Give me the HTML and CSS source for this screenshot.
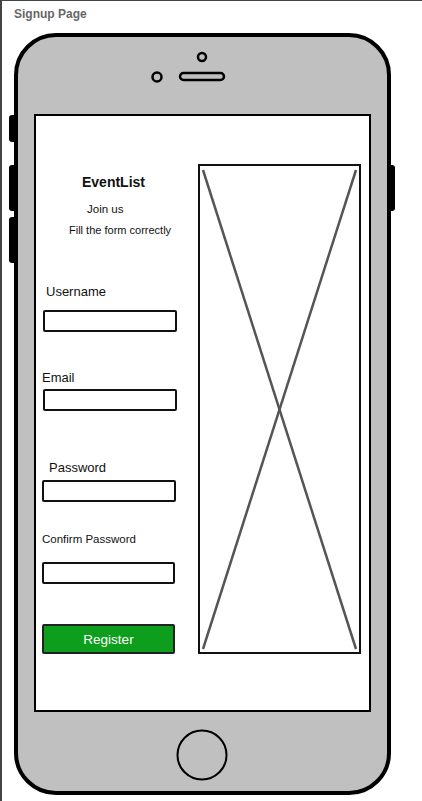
FILE: index.html
```html
<!DOCTYPE html>
<html lang="en">
<head>
    <meta charset="UTF-8">
    <meta name="viewport" content="width=device-width, initial-scale=1.0">
    <title>Signup Page</title>
    <link rel="stylesheet" href="styles.css">
</head>
<body>
    <div class="page">
        <div class="page-title">Signup Page</div>
        <div class="phone">
            <span class="side-btn btn-mute"></span>
            <span class="side-btn btn-vol-up"></span>
            <span class="side-btn btn-vol-down"></span>
            <span class="power-btn"></span>

            <!-- top bezel: camera, sensor, speaker -->
            <svg class="bezel-top" width="369" height="77" viewBox="0 0 369 77">
                <circle cx="184" cy="20" r="4" fill="none" stroke="#000" stroke-width="2.5"/>
                <circle cx="139" cy="40" r="4.5" fill="none" stroke="#000" stroke-width="2.5"/>
                <rect x="162" y="36" width="44" height="7" rx="3.5" fill="none" stroke="#000" stroke-width="2.5"/>
            </svg>

            <div class="screen">
                <div class="form-col">
                    <div class="app-name">EventList</div>
                    <div class="join">Join us</div>
                    <div class="hint">Fill the form correctly</div>

                    <label class="lbl lbl-user" for="username">Username</label>
                    <input class="field field-user" type="text" id="username">

                    <label class="lbl lbl-email" for="email">Email</label>
                    <input class="field field-email" type="text" id="email">

                    <label class="lbl lbl-pass" for="password">Password</label>
                    <input class="field field-pass" type="password" id="password">

                    <label class="lbl lbl-confirm" for="confirm">Confirm Password</label>
                    <input class="field field-confirm" type="password" id="confirm">

                    <button class="register">Register</button>
                </div>

                <div class="image-box">
                    <svg width="100%" height="100%" viewBox="0 0 159 486" preserveAspectRatio="none">
                        <line x1="3" y1="4" x2="156" y2="483" stroke="#555" stroke-width="2.5"/>
                        <line x1="156" y1="4" x2="3" y2="483" stroke="#555" stroke-width="2.5"/>
                    </svg>
                </div>
            </div>

            <!-- bottom bezel: home button -->
            <svg class="bezel-bottom" width="369" height="79" viewBox="0 0 369 79">
                <circle cx="184" cy="43" r="24.5" fill="none" stroke="#000" stroke-width="2"/>
            </svg>
        </div>
    </div>
</body>
</html>
```

FILE: styles.css
```css
* {
    box-sizing: border-box;
}
body {
    margin: 0;
    font-family: "Liberation Sans", Arial, sans-serif;
    background: #fff;
}
.page {
    width: 422px;
    height: 801px;
    border-top: 1px solid #444;
    border-left: 2px solid #444;
    overflow: hidden;
}
.page-title {
    padding: 6px 0 0 12px;
    font-size: 12px;
    line-height: 14px;
    font-weight: bold;
    color: #666;
}

/* phone body */
.phone {
    position: relative;
    width: 377px;
    height: 762px;
    margin: 12px 0 0 12px;
    border: 4px solid #000;
    border-radius: 42px;
    background: #c0c0c0;
}
.bezel-top,
.bezel-bottom {
    display: block;
}
.side-btn {
    position: absolute;
    left: -9px;
    width: 6px;
    background: #000;
    border-radius: 3px 0 0 3px;
}
.btn-mute {
    top: 78px;
    height: 27px;
}
.btn-vol-up {
    top: 128px;
    height: 46px;
}
.btn-vol-down {
    top: 180px;
    height: 46px;
}
.power-btn {
    position: absolute;
    right: -8px;
    top: 128px;
    width: 5px;
    height: 46px;
    background: #000;
    border-radius: 0 3px 3px 0;
}

/* screen */
.screen {
    display: flex;
    width: 337px;
    height: 598px;
    margin-left: 16px;
    border: 2px solid #000;
    background: #fff;
    font-family: "Liberation Sans", Arial, sans-serif;
    color: #111;
}
.form-col {
    display: flex;
    flex-direction: column;
    align-items: flex-start;
    width: 162px;
    padding: 58px 0 0 6px;
}
.app-name {
    margin-left: 40px;
    font-size: 14px;
    line-height: 16px;
    font-weight: bold;
}
.join {
    margin: 12px 0 0 45px;
    font-size: 11.5px;
    line-height: 14px;
}
.hint {
    margin: 8px 0 0 27px;
    font-size: 11px;
    line-height: 13px;
}
.lbl {
    font-size: 13px;
    line-height: 16px;
}
.lbl-user {
    margin: 47px 0 0 4px;
}
.lbl-email {
    margin-top: 38px;
}
.lbl-pass {
    margin: 49px 0 0 7px;
}
.lbl-confirm {
    margin-top: 30px;
    font-size: 11.5px;
    line-height: 14px;
}
.field {
    width: 134px;
    height: 22px;
    border: 2px solid #111;
    border-radius: 2px;
    background: #fff;
    padding: 0 4px;
}
.field-user {
    margin: 10px 0 0 1px;
}
.field-email {
    margin: 3px 0 0 1px;
}
.field-pass {
    margin-top: 4px;
}
.field-confirm {
    margin-top: 16px;
    width: 133px;
}
.register {
    margin-top: 40px;
    width: 133px;
    height: 30px;
    border: 2px solid #222;
    border-radius: 2px;
    background: #0c9e1c;
    color: #fff;
    font-family: "Liberation Sans", Arial, sans-serif;
    font-size: 13.5px;
}
.image-box {
    width: 163px;
    height: 490px;
    margin-top: 48px;
    border: 2px solid #111;
}
.image-box svg {
    display: block;
}
```
